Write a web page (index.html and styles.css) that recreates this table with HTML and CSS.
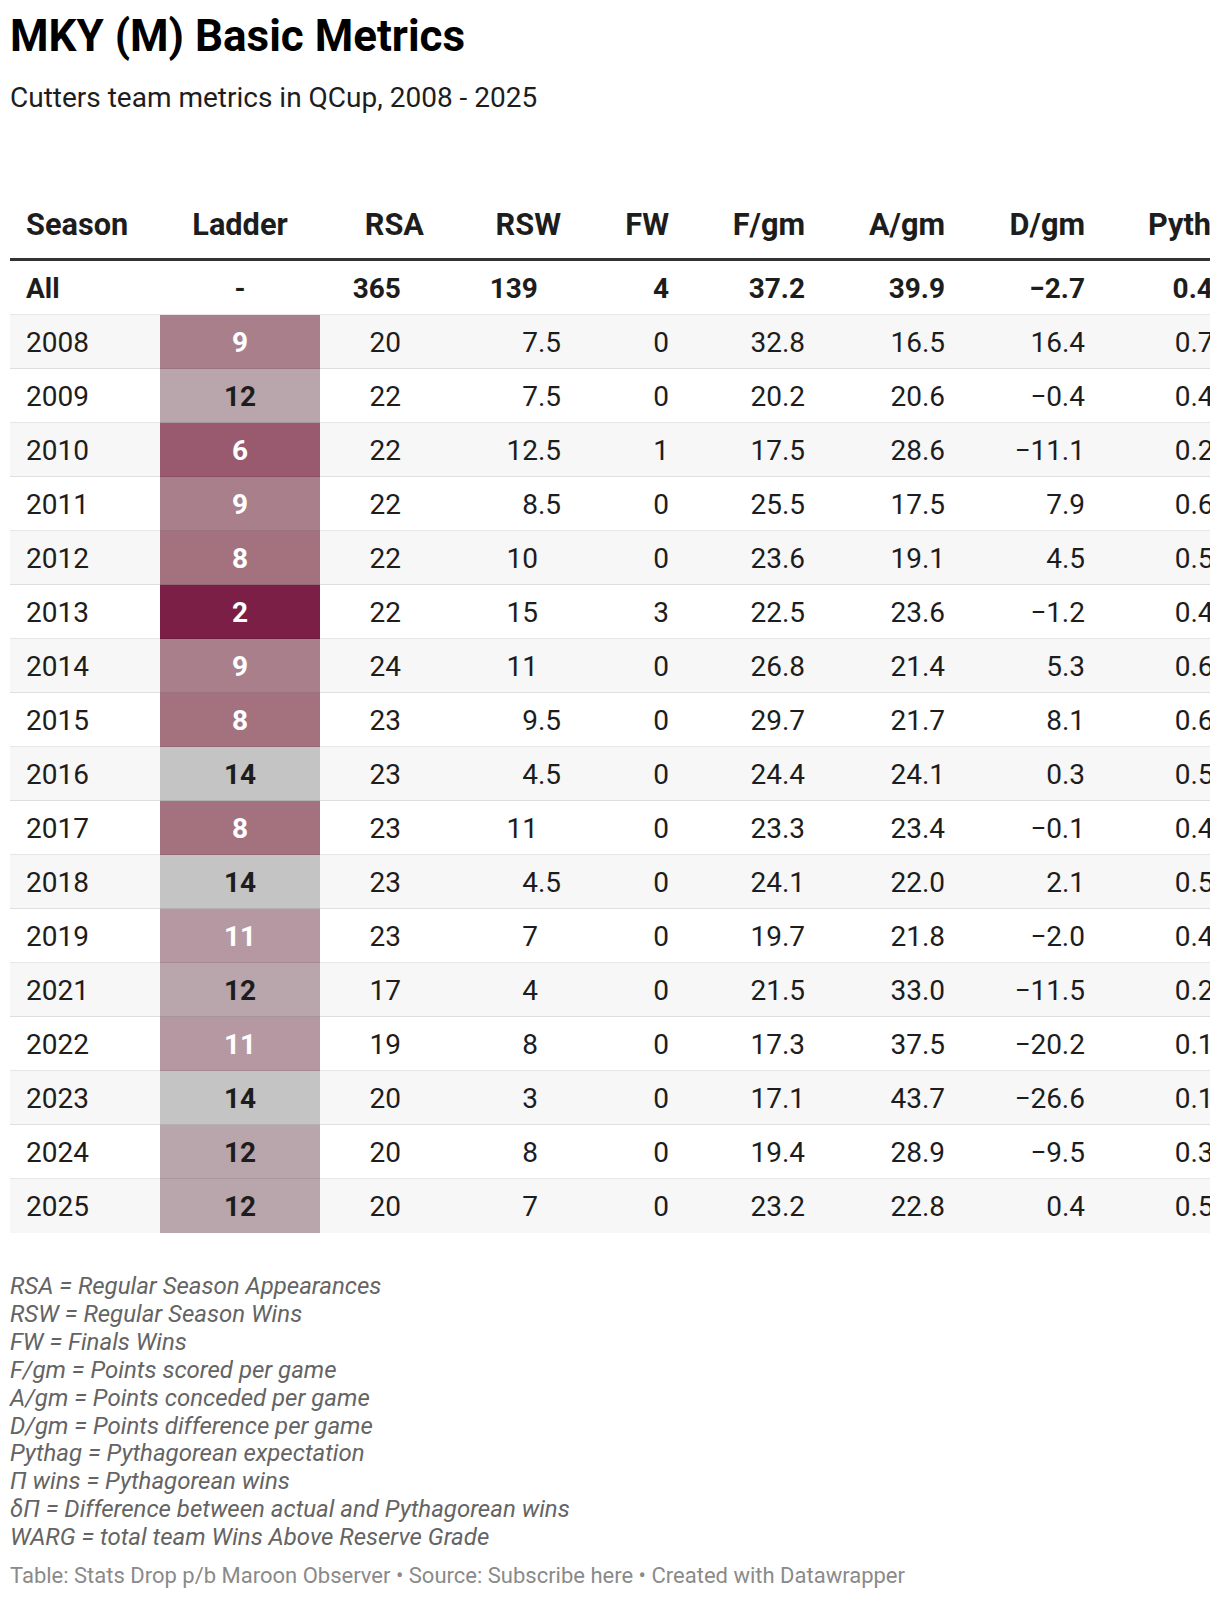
FILE: index.html
```html
<!DOCTYPE html>
<html lang="en">
<head>
<meta charset="utf-8">
<title>MKY (M) Basic Metrics</title>
<link rel="stylesheet" href="styles.css">
</head>
<body>
<div class="chart">
  <h1 class="title">MKY (M) Basic Metrics</h1>
  <p class="subtitle">Cutters team metrics in QCup, 2008 - 2025</p>
  <div class="table-wrap">
    <table class="metrics">
      <colgroup>
        <col class="c-season"><col class="c-ladder"><col class="c-rsa"><col class="c-rsw"><col class="c-fw"><col class="c-fgm"><col class="c-agm"><col class="c-dgm"><col class="c-pyth"><col class="c-pw"><col class="c-dp"><col class="c-warg">
      </colgroup>
      <thead>
        <tr>
          <th class="left">Season</th><th class="center">Ladder</th><th>RSA</th><th>RSW</th><th>FW</th><th>F/gm</th><th>A/gm</th><th>D/gm</th><th>Pythag</th><th>Π wins</th><th>δΠ</th><th>WARG</th>
        </tr>
      </thead>
      <tbody>
        <tr class="total">
          <td class="left">All</td><td class="center">-</td><td><span class="i">365</span><span class="f"></span></td><td><span class="i">139</span><span class="f"></span></td><td>4</td><td>37.2</td><td>39.9</td><td>−2.7</td><td>0.465</td><td>169.7</td><td>−30.7</td><td>41.2</td>
        </tr>
        <tr class="alt">
          <td class="left">2008</td><td class="lad r9">9</td><td><span class="i">20</span><span class="f"></span></td><td><span class="i">7</span><span class="f">.5</span></td><td>0</td><td>32.8</td><td>16.5</td><td>16.4</td><td>0.737</td><td>14.7</td><td>−7.2</td><td>2.1</td>
        </tr>
        <tr>
          <td class="left">2009</td><td class="lad r12">12</td><td><span class="i">22</span><span class="f"></span></td><td><span class="i">7</span><span class="f">.5</span></td><td>0</td><td>20.2</td><td>20.6</td><td>−0.4</td><td>0.490</td><td>10.8</td><td>−3.3</td><td>1.4</td>
        </tr>
        <tr class="alt">
          <td class="left">2010</td><td class="lad r6">6</td><td><span class="i">22</span><span class="f"></span></td><td><span class="i">12</span><span class="f">.5</span></td><td>1</td><td>17.5</td><td>28.6</td><td>−11.1</td><td>0.272</td><td>6.0</td><td>6.5</td><td>2.8</td>
        </tr>
        <tr>
          <td class="left">2011</td><td class="lad r9">9</td><td><span class="i">22</span><span class="f"></span></td><td><span class="i">8</span><span class="f">.5</span></td><td>0</td><td>25.5</td><td>17.5</td><td>7.9</td><td>0.680</td><td>15.0</td><td>−6.5</td><td>2.3</td>
        </tr>
        <tr class="alt">
          <td class="left">2012</td><td class="lad r8">8</td><td><span class="i">22</span><span class="f"></span></td><td><span class="i">10</span><span class="f"></span></td><td>0</td><td>23.6</td><td>19.1</td><td>4.5</td><td>0.579</td><td>12.7</td><td>−2.7</td><td>2.6</td>
        </tr>
        <tr>
          <td class="left">2013</td><td class="lad r2">2</td><td><span class="i">22</span><span class="f"></span></td><td><span class="i">15</span><span class="f"></span></td><td>3</td><td>22.5</td><td>23.6</td><td>−1.2</td><td>0.489</td><td>10.8</td><td>4.2</td><td>4.9</td>
        </tr>
        <tr class="alt">
          <td class="left">2014</td><td class="lad r9">9</td><td><span class="i">24</span><span class="f"></span></td><td><span class="i">11</span><span class="f"></span></td><td>0</td><td>26.8</td><td>21.4</td><td>5.3</td><td>0.610</td><td>14.6</td><td>−3.6</td><td>2.9</td>
        </tr>
        <tr>
          <td class="left">2015</td><td class="lad r8">8</td><td><span class="i">23</span><span class="f"></span></td><td><span class="i">9</span><span class="f">.5</span></td><td>0</td><td>29.7</td><td>21.7</td><td>8.1</td><td>0.652</td><td>15.0</td><td>−5.5</td><td>2.7</td>
        </tr>
        <tr class="alt">
          <td class="left">2016</td><td class="lad r14">14</td><td><span class="i">23</span><span class="f"></span></td><td><span class="i">4</span><span class="f">.5</span></td><td>0</td><td>24.4</td><td>24.1</td><td>0.3</td><td>0.503</td><td>11.6</td><td>−7.1</td><td>0.9</td>
        </tr>
        <tr>
          <td class="left">2017</td><td class="lad r8">8</td><td><span class="i">23</span><span class="f"></span></td><td><span class="i">11</span><span class="f"></span></td><td>0</td><td>23.3</td><td>23.4</td><td>−0.1</td><td>0.499</td><td>11.5</td><td>−0.5</td><td>2.4</td>
        </tr>
        <tr class="alt">
          <td class="left">2018</td><td class="lad r14">14</td><td><span class="i">23</span><span class="f"></span></td><td><span class="i">4</span><span class="f">.5</span></td><td>0</td><td>24.1</td><td>22.0</td><td>2.1</td><td>0.545</td><td>12.5</td><td>−8.0</td><td>0.8</td>
        </tr>
        <tr>
          <td class="left">2019</td><td class="lad r11">11</td><td><span class="i">23</span><span class="f"></span></td><td><span class="i">7</span><span class="f"></span></td><td>0</td><td>19.7</td><td>21.8</td><td>−2.0</td><td>0.449</td><td>10.3</td><td>−3.3</td><td>1.5</td>
        </tr>
        <tr class="alt">
          <td class="left">2021</td><td class="lad r12">12</td><td><span class="i">17</span><span class="f"></span></td><td><span class="i">4</span><span class="f"></span></td><td>0</td><td>21.5</td><td>33.0</td><td>−11.5</td><td>0.298</td><td>5.1</td><td>−1.1</td><td>0.7</td>
        </tr>
        <tr>
          <td class="left">2022</td><td class="lad r11">11</td><td><span class="i">19</span><span class="f"></span></td><td><span class="i">8</span><span class="f"></span></td><td>0</td><td>17.3</td><td>37.5</td><td>−20.2</td><td>0.176</td><td>3.3</td><td>4.7</td><td>1.8</td>
        </tr>
        <tr class="alt">
          <td class="left">2023</td><td class="lad r14">14</td><td><span class="i">20</span><span class="f"></span></td><td><span class="i">3</span><span class="f"></span></td><td>0</td><td>17.1</td><td>43.7</td><td>−26.6</td><td>0.133</td><td>2.7</td><td>0.3</td><td>0.4</td>
        </tr>
        <tr>
          <td class="left">2024</td><td class="lad r12">12</td><td><span class="i">20</span><span class="f"></span></td><td><span class="i">8</span><span class="f"></span></td><td>0</td><td>19.4</td><td>28.9</td><td>−9.5</td><td>0.310</td><td>6.2</td><td>1.8</td><td>1.6</td>
        </tr>
        <tr class="alt last">
          <td class="left">2025</td><td class="lad r12">12</td><td><span class="i">20</span><span class="f"></span></td><td><span class="i">7</span><span class="f"></span></td><td>0</td><td>23.2</td><td>22.8</td><td>0.4</td><td>0.508</td><td>10.2</td><td>−3.2</td><td>1.3</td>
        </tr>
      </tbody>
    </table>
  </div>
  <div class="notes">
    <p>RSA = Regular Season Appearances</p>
    <p>RSW = Regular Season Wins</p>
    <p>FW = Finals Wins</p>
    <p>F/gm = Points scored per game</p>
    <p>A/gm = Points conceded per game</p>
    <p>D/gm = Points difference per game</p>
    <p>Pythag = Pythagorean expectation</p>
    <p>Π wins = Pythagorean wins</p>
    <p>δΠ = Difference between actual and Pythagorean wins</p>
    <p>WARG = total team Wins Above Reserve Grade</p>
  </div>
  <p class="footer">Table: Stats Drop p/b Maroon Observer • Source: Subscribe here • Created with Datawrapper</p>
</div>
</body>
</html>
```

FILE: styles.css
```css
html, body {
  margin: 0;
  padding: 0;
  background: #ffffff;
}

body {
  font-family: Roboto, "Noto Sans", "Liberation Sans", sans-serif;
  color: #1d1d1d;
}

.chart {
  padding: 10px 10px 0 10px;
}

.title {
  margin: 0;
  font-size: 44px;
  line-height: 52px;
  font-weight: 700;
  color: #000000;
}

.subtitle {
  margin: 20px 0 0 0;
  font-size: 28px;
  line-height: 32px;
  font-weight: 400;
  color: #1d1d1d;
}

.table-wrap {
  width: 1200px;
  overflow: hidden;
  margin-top: 86px;
}

.metrics {
  border-collapse: separate;
  border-spacing: 0;
  table-layout: fixed;
  width: 1671px;
  font-size: 28px;
  line-height: 34px;
}

.c-season { width: 150px; }
.c-ladder { width: 160px; }
.c-rsa { width: 120px; }
.c-rsw { width: 137px; }
.c-fw { width: 108px; }
.c-fgm { width: 136px; }
.c-agm { width: 140px; }
.c-dgm { width: 140px; }
.c-pyth { width: 160px; }
.c-pw { width: 140px; }
.c-dp { width: 140px; }
.c-warg { width: 140px; }

.metrics th {
  padding: 8px 16px 16px 16px;
  font-size: 30.7px;
  font-weight: 700;
  text-align: right;
  white-space: nowrap;
  border-bottom: 3px solid #333333;
  color: #1d1d1d;
}

.metrics td {
  padding: 11px 16px 8px 16px;
  text-align: right;
  white-space: nowrap;
  border-bottom: 1px solid rgba(0, 0, 0, 0.095);
  color: #1d1d1d;
}

.metrics .left { text-align: left; padding-left: 16px; }
.metrics .center { text-align: center; }

.metrics tr.alt td { background: #f7f7f7; }
.metrics tr.last td { border-bottom-color: transparent; }

.metrics tr.total td { font-weight: 700; }

.i { display: inline; }
.f {
  display: inline-block;
  width: 0.826em;
  text-align: left;
}

.metrics td.lad {
  text-align: center;
  font-weight: 700;
  color: #ffffff;
}

.metrics tr td.r2 { background: #7b1f46; }
.metrics tr td.r6 { background: #995a6f; }
.metrics tr td.r8 { background: #a4717f; }
.metrics tr td.r9 { background: #a97f8b; }
.metrics tr td.r11 { background: #b598a2; }
.metrics tr td.r12 { background: #b9a6ac; color: #1d1d1d; }
.metrics tr td.r14 { background: #c4c4c4; color: #1d1d1d; }

.notes {
  margin-top: 40px;
  font-size: 24px;
  line-height: 27.9px;
  font-style: italic;
  color: #646464;
}

.notes p { margin: 0; }

.footer {
  margin: 10px 0 0 0;
  font-size: 22px;
  line-height: 28px;
  color: #8a8a8a;
}
```
